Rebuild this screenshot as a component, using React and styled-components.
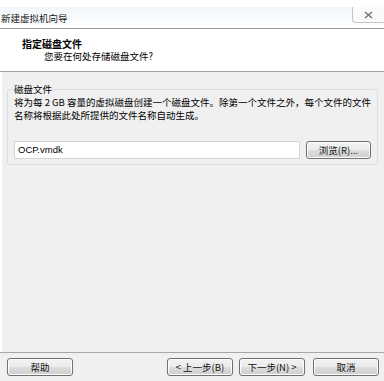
import styled, { createGlobalStyle } from "styled-components";

const GlobalStyle = createGlobalStyle`
  html, body {
    margin: 0;
    padding: 0;
    background: #ffffff;
  }
  body {
    font-family: "Noto Sans CJK SC", "Liberation Sans", sans-serif;
    color: #000;
  }
`;

const Window = styled.div`
  width: 384px;
  height: 381px;
  display: flex;
  flex-direction: column;
  overflow: hidden;
  background: #ffffff;
`;

const TopStrip = styled.div`
  height: 7px;
  background: #ffffff;
`;

const TitleBar = styled.div`
  height: 21px;
  display: flex;
  justify-content: space-between;
  align-items: flex-start;
  background: linear-gradient(#f1f7fc, #ffffff);
  border-bottom: 1px solid #9c9c9c;
`;

const TitleText = styled.div`
  font-size: 9.5px;
  line-height: 22px;
  padding-left: 1px;
  color: #1a1a1a;
`;

const CloseButton = styled.div`
  width: 31px;
  height: 15px;
  border: 1px solid #c4c4c4;
  border-top: none;
  border-right: none;
  border-bottom-left-radius: 4px;
  background: #fafafa;
  display: flex;
  align-items: center;
  justify-content: center;
`;

const Header = styled.div`
  height: 42px;
  background: #ffffff;
  border-bottom: 1px solid #a0a0a0;
  display: flex;
  flex-direction: column;
  justify-content: center;
  padding-left: 22px;
`;

const HeaderTitle = styled.div`
  font-size: 10px;
  font-weight: bold;
  line-height: 13px;
`;

const HeaderSub = styled.div`
  font-size: 9.5px;
  line-height: 13px;
  padding-left: 22px;
`;

const Body = styled.div`
  flex: 1;
  background: #f0f0f0;
  border-left: 2px solid #ffffff;
  padding: 11px 6px 0 5px;
`;

const GroupBox = styled.fieldset`
  margin: 0;
  padding: 0 6px 5px 6px;
  border: 1px solid #d5dfe5;
  border-radius: 3px;
`;

const Legend = styled.legend`
  font-size: 9.5px;
  padding: 0 1px;
  margin-left: -1px;
  line-height: 12px;
`;

const Description = styled.p`
  margin: 1px 0 0 0;
  font-size: 9.5px;
  line-height: 13px;
`;

const PathRow = styled.div`
  display: flex;
  align-items: center;
  gap: 6px;
  margin-top: 19px;
`;

const PathInput = styled.div`
  flex: 1;
  height: 16px;
  border: 1px solid #cfd6dc;
  background: #ffffff;
  font-family: "Liberation Sans", sans-serif;
  font-size: 9.5px;
  line-height: 16px;
  padding-left: 3px;
`;

const Button = styled.div`
  width: ${(p) => p.$w || 66}px;
  height: 18px;
  margin-left: ${(p) => p.$ml || 0}px;
  box-sizing: border-box;
  border: 1px solid #707070;
  border-radius: 3px;
  background: linear-gradient(#f2f2f2 0%, #ebebeb 50%, #dddddd 51%, #cfcfcf 100%);
  box-shadow: inset 0 0 0 1px #fcfcfc;
  display: flex;
  align-items: center;
  justify-content: center;
  font-size: 9.5px;
  color: #111;
`;

const Footer = styled.div`
  height: 28px;
  background: #f0f0f0;
  border-top: 1px solid #a8a8a8;
  display: flex;
  align-items: center;
  padding: 0 5px 0 7px;
`;

const Spacer = styled.div`
  flex: 1;
`;

const CloseGlyph = () => (
  <svg width="9" height="8" viewBox="0 0 9 8">
    <path
      d="M1 1 L8 7 M8 1 L1 7"
      stroke="#777"
      strokeWidth="1.6"
      fill="none"
    />
  </svg>
);

export default function App() {
  return (
    <>
      <GlobalStyle />
      <Window>
        <TopStrip />
        <TitleBar>
          <TitleText>新建虚拟机向导</TitleText>
          <CloseButton>
            <CloseGlyph />
          </CloseButton>
        </TitleBar>
        <Header>
          <HeaderTitle>指定磁盘文件</HeaderTitle>
          <HeaderSub>您要在何处存储磁盘文件?</HeaderSub>
        </Header>
        <Body>
          <GroupBox>
            <Legend>磁盘文件</Legend>
            <Description>
              将为每 2 GB 容量的虚拟磁盘创建一个磁盘文件。除第一个文件之外，每个文件的文件
              名称将根据此处所提供的文件名称自动生成。
            </Description>
            <PathRow>
              <PathInput>OCP.vmdk</PathInput>
              <Button $w={65}>浏览(R)...</Button>
            </PathRow>
          </GroupBox>
        </Body>
        <Footer>
          <Button>帮助</Button>
          <Spacer />
          <Button>&lt; 上一步(B)</Button>
          <Button $ml={6}>下一步(N) &gt;</Button>
          <Button $ml={8}>取消</Button>
        </Footer>
      </Window>
    </>
  );
}
